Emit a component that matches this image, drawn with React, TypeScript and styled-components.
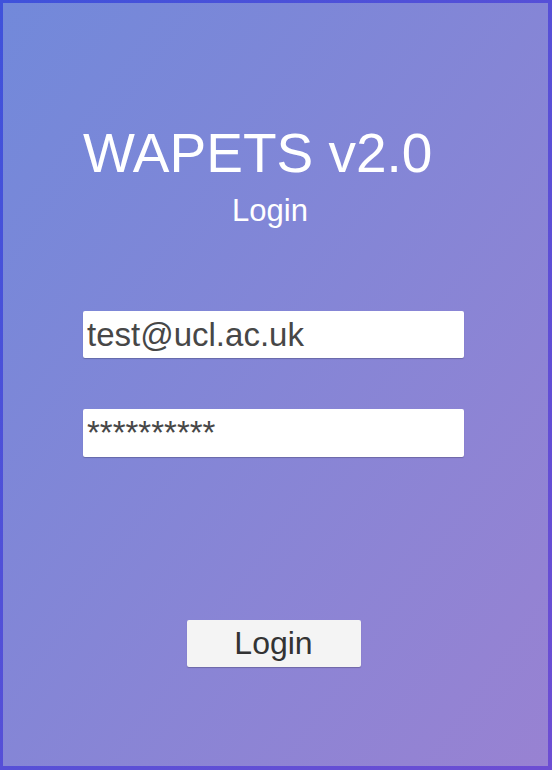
import * as React from 'react';
import styled, {createGlobalStyle} from 'styled-components';

const GlobalStyle = createGlobalStyle`
    html, body {
        margin: 0;
        padding: 0;
    }
    body {
        font-family: "Liberation Sans", Arial, sans-serif;
    }
    * {
        box-sizing: border-box;
    }
`;

// outer frame carries the darker edge colour
const Frame = styled.div`
    width: 552px;
    height: 770px;
    padding: 3px 4px 4px 3px;
    background: linear-gradient(to bottom right, #3f52db, #6d4dd3);
`;

const Screen = styled.div`
    height: 100%;
    padding: 119px 84px 0 80px;
    background: linear-gradient(to bottom right, #7289da, #9882d2);
    display: flex;
    flex-direction: column;
`;

const Title = styled.h1`
    margin: 0;
    font-weight: normal;
    font-size: 55px;
    line-height: 62px;
    color: #fff;
    white-space: nowrap;
`;

const Subtitle = styled.h2`
    margin: 10px 0 0;
    padding-right: 7px;
    font-weight: normal;
    font-size: 31px;
    line-height: 34px;
    color: #fff;
    text-align: center;
`;

const Field = styled.input<{$top: number; $h: number}>`
    display: block;
    width: 100%;
    height: ${p => p.$h}px;
    margin: ${p => p.$top}px 0 0;
    padding: 0 0 0 4px;
    border: none;
    border-radius: 2px;
    background: #fff;
    box-shadow: 0 1px 1px rgba(0, 0, 0, 0.22);
    font-family: "Liberation Sans", Arial, sans-serif;
    font-size: 33px;
    color: #474747;
    outline: none;
`;

const Button = styled.button`
    align-self: center;
    width: 174px;
    height: 47px;
    margin-top: 163px;
    border: none;
    border-radius: 2px;
    background: #f4f4f4;
    box-shadow: 0 1px 1px rgba(0, 0, 0, 0.22);
    font-family: "Liberation Sans", Arial, sans-serif;
    font-size: 32px;
    color: #333;
    padding: 0;
    cursor: pointer;
`;

const App: React.FC = () => {
    const [email, setEmail] = React.useState('test@ucl.ac.uk');
    const [pass, setPass] = React.useState('**********');

    return <Frame>
        <GlobalStyle />
        <Screen>
            <Title>WAPETS v2.0</Title>
            <Subtitle>Login</Subtitle>
            <Field $top={83} $h={47} value={email} onChange={e => setEmail(e.target.value)} />
            <Field $top={51} $h={48} value={pass} onChange={e => setPass(e.target.value)} />
            <Button>Login</Button>
        </Screen>
    </Frame>
}

export default App;
